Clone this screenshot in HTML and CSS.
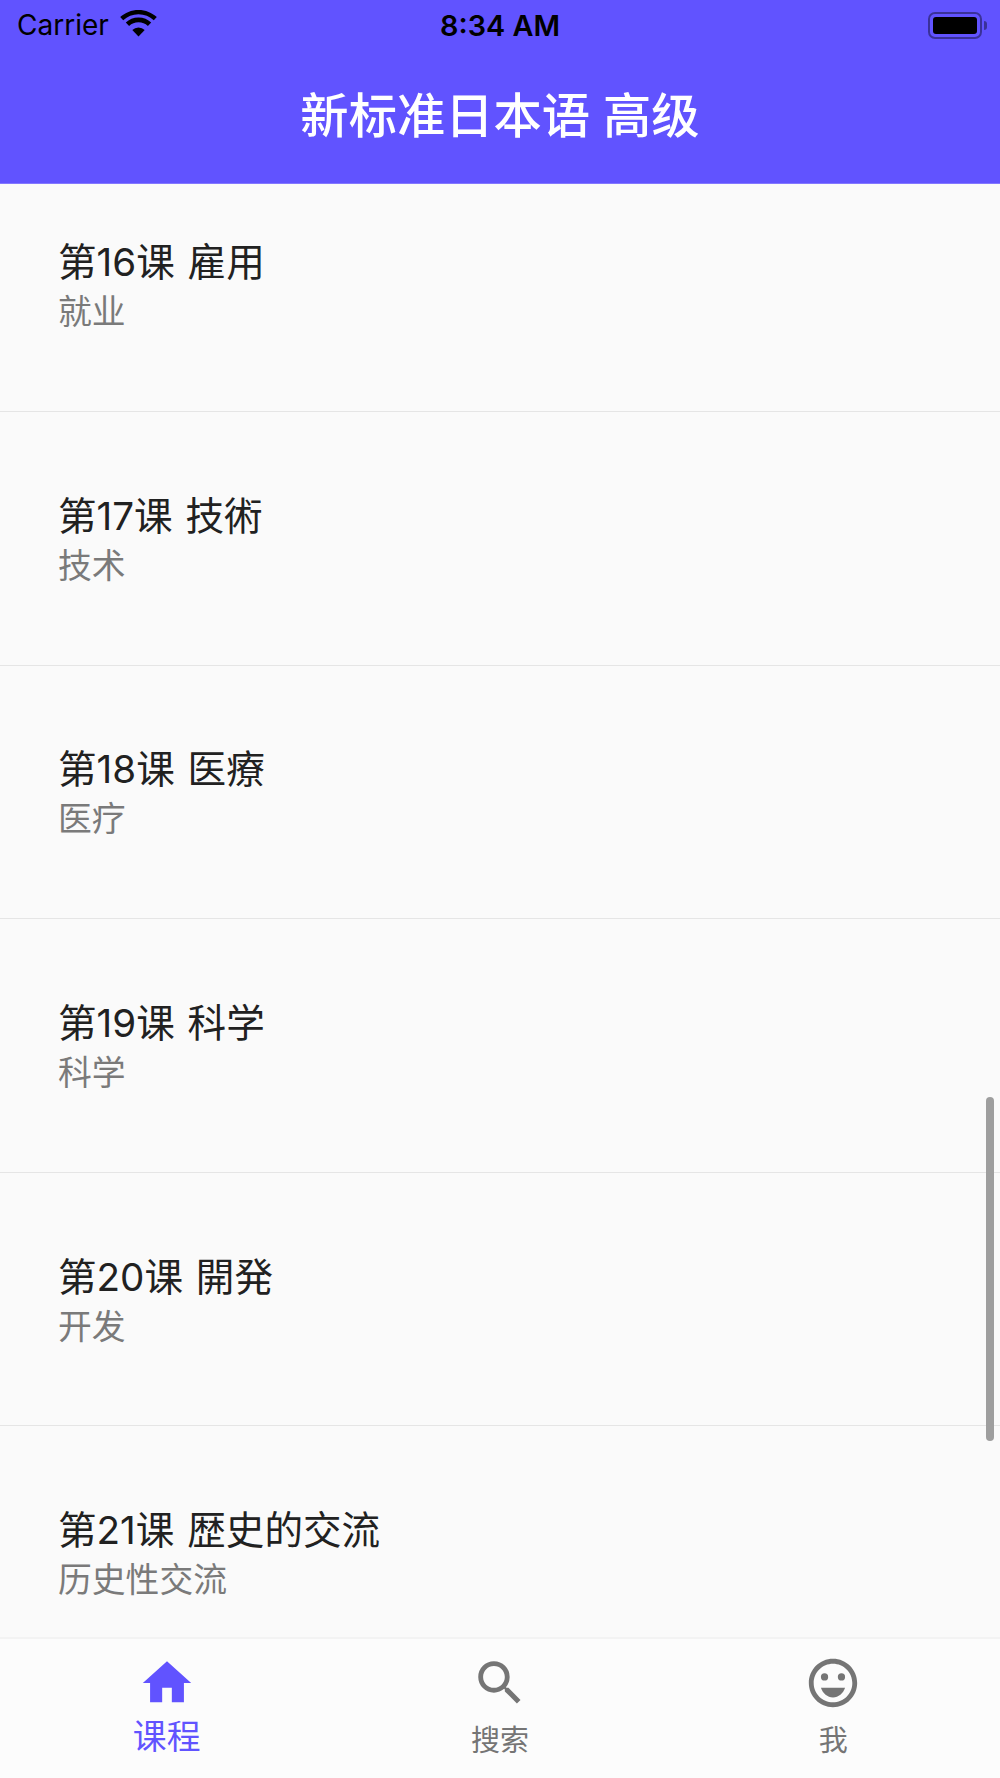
FILE: index.html
```html
<!DOCTYPE html>
<html lang="zh-CN">

<head>
  <meta charset="UTF-8">
  <meta name="viewport" content="width=device-width, initial-scale=1.0">
  <title>新标准日本语 高级</title>
  <link rel="stylesheet" href="styles.css">
</head>

<body>
  <header class="app-header">
    <div class="status-bar">
      <div class="status-left">
        <span class="carrier">Carrier</span>
        <svg class="wifi" viewBox="0 0 37 27" width="37" height="27">
          <path d="M18.5 26.5 12.3 20a8.8 8.8 0 0 1 12.4 0z"/>
          <path d="M18.5 6.5c-5 0-9.4 1.900-12.700 5l3.300 3.500a13.700 13.700 0 0 1 18.800 0l3.300-3.500c-3.300-3.100-7.700-5-12.700-5z" transform="translate(0 1)"/>
          <path d="M18.500 0C11.400 0 5 2.700.2 7.100l3 3.200A22.300 22.300 0 0 1 18.500 4.300c5.900 0 11.200 2.300 15.300 6l3-3.200C32 2.700 25.600 0 18.500 0z"/>
        </svg>
      </div>
      <span class="clock">8:34 AM</span>
      <div class="battery">
        <div class="battery-body"><div class="battery-level"></div></div>
        <div class="battery-cap"></div>
      </div>
    </div>
    <h1 class="app-title">新标准日本语 高级</h1>
  </header>

  <main class="content">
    <ul class="lessons">
      <li class="lesson">
        <div class="lesson-title">第16课 雇用</div>
        <div class="lesson-sub">就业</div>
      </li>
      <li class="lesson">
        <div class="lesson-title">第17课 技術</div>
        <div class="lesson-sub">技术</div>
      </li>
      <li class="lesson">
        <div class="lesson-title">第18课 医療</div>
        <div class="lesson-sub">医疗</div>
      </li>
      <li class="lesson">
        <div class="lesson-title">第19课 科学</div>
        <div class="lesson-sub">科学</div>
      </li>
      <li class="lesson">
        <div class="lesson-title">第20课 開発</div>
        <div class="lesson-sub">开发</div>
      </li>
      <li class="lesson">
        <div class="lesson-title">第21课 歴史的交流</div>
        <div class="lesson-sub">历史性交流</div>
      </li>
    </ul>
    <div class="scrollbar"></div>
  </main>

  <nav class="tabs">
    <a class="tab tab-active">
      <svg class="tab-icon" viewBox="0 0 24 24" width="58" height="58"><path d="M10 20v-6h4v6h5v-8h3L12 3 2 12h3v8z"/></svg>
      <span class="tab-label">课程</span>
    </a>
    <a class="tab">
      <svg class="tab-icon" viewBox="0 0 24 24" width="58" height="58"><path d="M15.500 14h-.79l-.28-.27A6.470 6.470 0 0 0 16 9.500 6.500 6.500 0 1 0 9.500 16c1.610 0 3.090-.59 4.230-1.570l.27.28v.79l5 4.990L20.490 19l-4.990-5zm-6 0C7.010 14 5 11.990 5 9.500S7.010 5 9.500 5 14 7.010 14 9.500 11.990 14 9.500 14z"/></svg>
      <span class="tab-label">搜索</span>
    </a>
    <a class="tab">
      <svg class="tab-icon" viewBox="0 0 24 24" width="58" height="58"><circle cx="15.500" cy="9.500" r="1.500"/><circle cx="8.500" cy="9.500" r="1.500"/><path d="M11.990 2C6.470 2 2 6.480 2 12s4.470 10 9.990 10C17.520 22 22 17.520 22 12S17.520 2 11.990 2zM12 20c-4.420 0-8-3.580-8-8s3.580-8 8-8 8 3.580 8 8-3.580 8-8 8zm-5-6c.78 2.340 2.720 4 5 4s4.220-1.660 5-4H7z"/></svg>
      <span class="tab-label">我</span>
    </a>
  </nav>
</body>

</html>
```

FILE: styles.css
```css
* {
  box-sizing: border-box;
}

html,
body {
  margin: 0;
  height: 1778px;
}

body {
  display: flex;
  flex-direction: column;
  overflow: hidden;
  background-color: #fafafa;
  color: #212121;
  font-family: Inter, "Noto Sans CJK SC", sans-serif;
}

/* header */
.app-header {
  flex: none;
  height: 184px;
  background-color: #6153ff;
  border-bottom: 1px solid #8377ff;
}

.status-bar {
  display: flex;
  align-items: center;
  justify-content: space-between;
  height: 50px;
  padding-inline: 17px 13px;
  color: #000;
}

.status-left {
  display: flex;
  flex: 1;
  align-items: center;
  gap: 11px;
}

.carrier {
  font-size: 28px;
}

.wifi {
  fill: #000;
  margin-block-end: 3px;
}

.clock {
  margin-inline-end: 4px;
  font-size: 28.800px;
  font-weight: 600;
}

.battery {
  display: flex;
  flex: 1;
  align-items: center;
  justify-content: flex-end;
  gap: 2px;
}

.battery-body {
  width: 54px;
  height: 27px;
  padding: 3px;
  border: 2px solid rgb(0 0 0 / 40%);
  border-radius: 7px;
}

.battery-level {
  height: 100%;
  border-radius: 3px;
  background-color: #000;
}

.battery-cap {
  width: 3px;
  height: 9px;
  border-radius: 0 3px 3px 0;
  background-color: rgb(0 0 0 / 40%);
}

.app-title {
  margin: 0;
  color: #fff;
  font-size: 48.300px;
  font-weight: 500;
  line-height: 132px;
  text-align: center;
}

/* list */
.content {
  position: relative;
  flex: 1;
  min-height: 0;
  overflow: hidden;
}

.lessons {
  margin: -25.600px 0 0;
  padding: 0;
  list-style: none;
}

.lesson {
  display: flex;
  flex-direction: column;
  justify-content: center;
  height: 253.600px;
  padding: 5px 58px 0;
  border-bottom: 1px solid #e5e5e5;
}

.lesson-title {
  font-size: 38.600px;
  line-height: 50px;
  word-spacing: 2px;
}

.lesson-sub {
  color: #7a7a7a;
  font-size: 33.800px;
  line-height: 50px;
}

.scrollbar {
  position: absolute;
  top: 913px;
  right: 6px;
  width: 8px;
  height: 344px;
  border-radius: 4px;
  background-color: #9e9e9e;
}

/* bottom tabs */
.tabs {
  display: flex;
  flex: none;
  height: 141px;
  background-color: #fcfcfc;
  border-top: 2px solid #f3f3f3;
}

.tab {
  display: flex;
  flex: 1;
  flex-direction: column;
  align-items: center;
  padding-block-start: 15px;
  color: #757575;
}

.tab-icon {
  flex: none;
  fill: currentColor;
}

.tab-label {
  font-size: 29px;
  line-height: 40px;
  margin-block-start: 9px;
}

.tab-active {
  color: #6153ff;
}

.tab-active .tab-label {
  font-size: 33.800px;
  margin-block-start: 5px;
}
```
